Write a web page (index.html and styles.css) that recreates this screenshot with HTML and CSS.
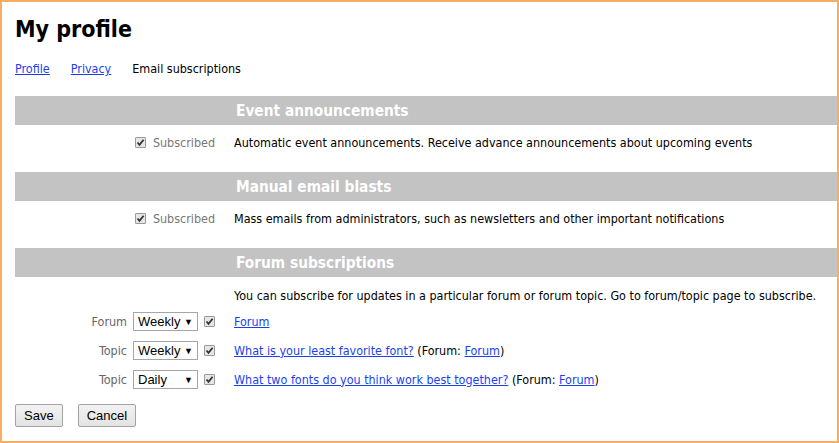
FILE: index.html
```html
<!DOCTYPE html>
<html>
<head>
<meta charset="utf-8">
<link rel="stylesheet" href="styles.css">
</head>
<body>
<div class="frame">
  <h1 class="title">My profile</h1>
  <nav class="tabs">
    <a href="#" class="tab-link">Profile</a>
    <a href="#" class="tab-link">Privacy</a>
    <span class="tab-current">Email subscriptions</span>
  </nav>
  <table class="subs">
    <tr class="bar"><th class="bar-empty"></th><th class="bar-title">Event announcements</th></tr>
    <tr class="row">
      <td class="left"><span class="cb"><svg viewBox="0 0 11 11" width="11" height="11"><path d="M2.5 5.5 L4.5 7.8 L8.6 2.8" fill="none" stroke="#333" stroke-width="1.8"/></svg></span><span class="muted">Subscribed</span></td>
      <td class="right">Automatic event announcements. Receive advance announcements about upcoming events</td>
    </tr>
    <tr class="bar"><th class="bar-empty"></th><th class="bar-title">Manual email blasts</th></tr>
    <tr class="row">
      <td class="left"><span class="cb"><svg viewBox="0 0 11 11" width="11" height="11"><path d="M2.5 5.5 L4.5 7.8 L8.6 2.8" fill="none" stroke="#333" stroke-width="1.8"/></svg></span><span class="muted">Subscribed</span></td>
      <td class="right">Mass emails from administrators, such as newsletters and other important notifications</td>
    </tr>
    <tr class="bar"><th class="bar-empty"></th><th class="bar-title">Forum subscriptions</th></tr>
    <tr class="row-desc">
      <td class="left"></td>
      <td class="right">You can subscribe for updates in a particular forum or forum topic. Go to forum/topic page to subscribe.</td>
    </tr>
    <tr class="row-forum">
      <td class="left"><div class="ctrls"><span class="label">Forum</span><span class="sel"><span class="sel-text">Weekly</span><span class="sel-arrow">▼</span></span><span class="cb cb-sm"><svg viewBox="0 0 11 11" width="11" height="11"><path d="M2.5 5.5 L4.5 7.8 L8.6 2.8" fill="none" stroke="#333" stroke-width="1.8"/></svg></span></div></td>
      <td class="right"><a href="#">Forum</a></td>
    </tr>
    <tr class="row-forum">
      <td class="left"><div class="ctrls"><span class="label">Topic</span><span class="sel"><span class="sel-text">Weekly</span><span class="sel-arrow">▼</span></span><span class="cb cb-sm"><svg viewBox="0 0 11 11" width="11" height="11"><path d="M2.5 5.5 L4.5 7.8 L8.6 2.8" fill="none" stroke="#333" stroke-width="1.8"/></svg></span></div></td>
      <td class="right"><a href="#">What is your least favorite font?</a> (Forum: <a href="#">Forum</a>)</td>
    </tr>
    <tr class="row-forum">
      <td class="left"><div class="ctrls"><span class="label">Topic</span><span class="sel"><span class="sel-text">Daily</span><span class="sel-arrow">▼</span></span><span class="cb cb-sm"><svg viewBox="0 0 11 11" width="11" height="11"><path d="M2.5 5.5 L4.5 7.8 L8.6 2.8" fill="none" stroke="#333" stroke-width="1.8"/></svg></span></div></td>
      <td class="right"><a href="#">What two fonts do you think work best together?</a> (Forum: <a href="#">Forum</a>)</td>
    </tr>
  </table>
  <div class="actions">
    <button class="btn">Save</button>
    <button class="btn">Cancel</button>
  </div>
</div>
</body>
</html>
```
FILE: styles.css
```css
html, body {
  margin: 0;
  padding: 0;
  background: #fff;
}
.frame {
  box-sizing: border-box;
  width: 839px;
  height: 443px;
  border: 2px solid #f8ae62;
  padding: 0 0 0 13px;
  font-family: "DejaVu Sans Condensed", "DejaVu Sans", sans-serif;
  font-size: 12.45px;
  color: #000;
  overflow: hidden;
}
.title {
  margin: 14px 0 0 0;
  font-size: 23px;
  line-height: 26px;
  font-weight: bold;
}
.tabs {
  display: flex;
  gap: 21px;
  margin-top: 19px;
  line-height: 16px;
}
.tab-link, a {
  color: #1a3ff0;
  text-decoration: underline;
}
.subs {
  margin-top: 19px;
  width: 822px;
  border-collapse: collapse;
  border-spacing: 0;
}
.bar th {
  background: #c3c3c3;
  height: 29px;
  padding: 0;
  color: #fff;
  font-size: 15.3px;
  font-weight: bold;
  text-align: left;
}
.bar-empty {
  width: 219px;
}
.bar-title {
  padding-left: 2px !important;
}
td {
  padding: 0;
  line-height: 16px;
}
.left {
  text-align: right;
  padding-right: 10px;
  white-space: nowrap;
}
.right {
  padding-left: 0;
  white-space: nowrap;
}
.row td {
  padding-top: 10px;
  padding-bottom: 21px;
}
.row td.left { padding-right: 19px; }
.row-desc td {
  padding-top: 11px;
  padding-bottom: 3px;
}
.row-forum td {
  height: 29px;
  padding-top: 0;
  padding-bottom: 0;
}
.row-forum td.left { padding-right: 19px; }
.ctrls {
  display: flex;
  justify-content: flex-end;
  align-items: center;
}
.muted {
  color: #777;
}
.cb {
  display: inline-block;
  box-sizing: border-box;
  width: 11px;
  height: 11px;
  border: 1px solid #9a9a9a;
  background: #e6e6e6;
  border-radius: 1px;
  vertical-align: -1px;
  margin-right: 7px;
  position: relative;
}
.cb svg {
  position: absolute;
  left: -1px;
  top: -1px;
}
.cb-sm {
  margin-right: 0;
  margin-left: 6px;
}
.label {
  color: #666;
  margin-right: 6px;
}
.sel {
  display: inline-flex;
  align-items: center;
  justify-content: space-between;
  box-sizing: border-box;
  width: 65px;
  height: 19px;
  border: 1px solid #a6a6a6;
  background: #fff;
  padding: 0 4px 0 4px;
  font-family: "Liberation Sans", Arial, sans-serif;
  font-size: 13px;
  text-align: left;
}
.sel-arrow {
  font-size: 9px;
}
.actions {
  display: flex;
  gap: 15px;
  margin-top: 10px;
}
.btn {
  box-sizing: border-box;
  height: 23px;
  padding: 0 8px;
  border: 1px solid #a3a3a3;
  border-radius: 2px;
  background: linear-gradient(#f2f2f2, #e3e3e3);
  font-family: "Liberation Sans", Arial, sans-serif;
  font-size: 13px;
  color: #000;
}
```
